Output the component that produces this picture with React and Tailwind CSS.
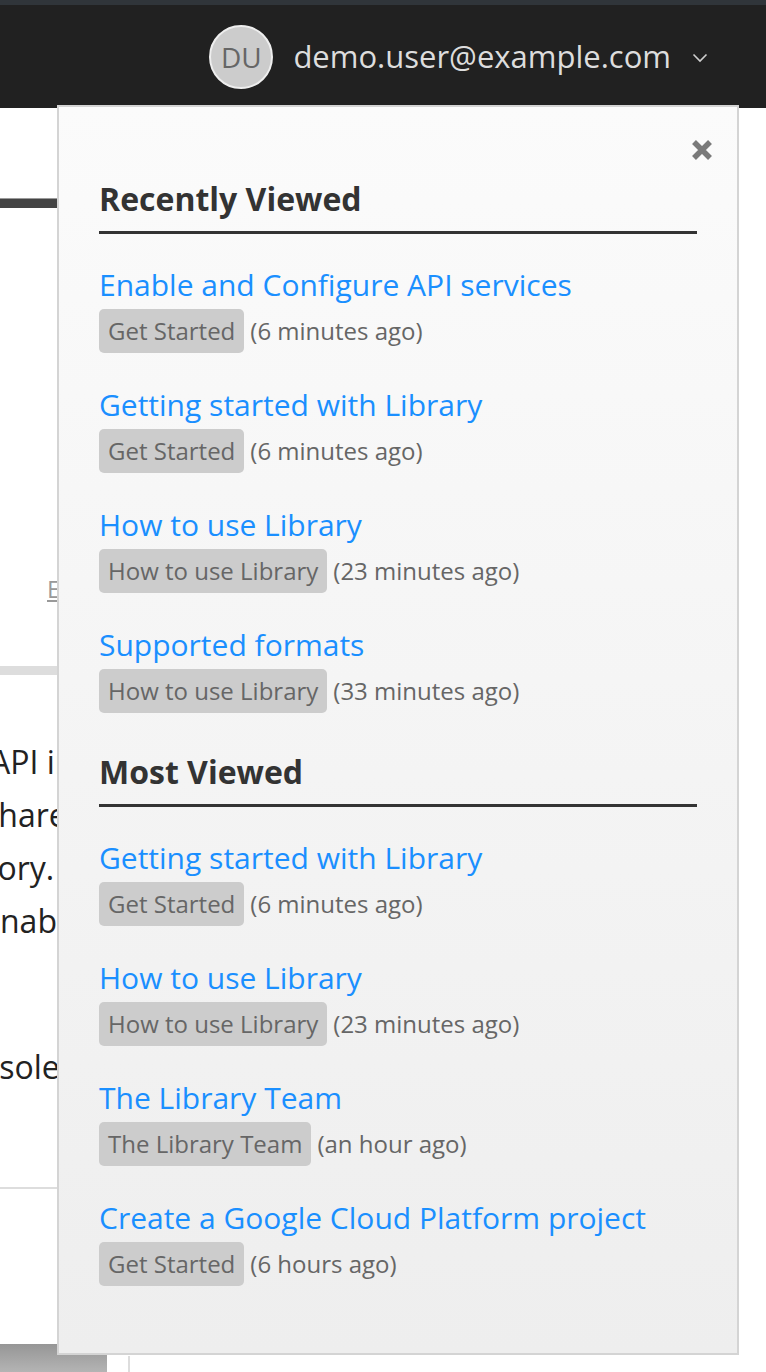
import React from 'react';

const recent = [
    { title: 'Enable and Configure API services', tag: 'Get Started', when: '(6 minutes ago)' },
    { title: 'Getting started with Library', tag: 'Get Started', when: '(6 minutes ago)' },
    { title: 'How to use Library', tag: 'How to use Library', when: '(23 minutes ago)' },
    { title: 'Supported formats', tag: 'How to use Library', when: '(33 minutes ago)' },
];

const popular = [
    { title: 'Getting started with Library', tag: 'Get Started', when: '(6 minutes ago)' },
    { title: 'How to use Library', tag: 'How to use Library', when: '(23 minutes ago)' },
    { title: 'The Library Team', tag: 'The Library Team', when: '(an hour ago)' },
    { title: 'Create a Google Cloud Platform project', tag: 'Get Started', when: '(6 hours ago)' },
];

const HistoryList = ({ items }) => (
    <ul className="mt-[31px] flex flex-col gap-[32px]">
        {items.map((item, i) => (
            <li key={i}>
                <a href="#" className="block text-[30px] leading-[40px] text-[#1a8fff] whitespace-nowrap">
                    {item.title}
                </a>
                <div className="mt-1 flex items-center text-[24px] text-[#666]">
                    <span className="h-[44px] px-[9px] leading-[44px] rounded-[5px] bg-[#cccccc]">{item.tag}</span>
                    <span className="ml-[6px]">{item.when}</span>
                </div>
            </li>
        ))}
    </ul>
);

const Section = ({ title, items, className = '' }) => (
    <section className={className}>
        <h2 className="text-[32px] leading-[36px] font-bold text-[#333] pb-[14px] border-b-[3px] border-[#333]">{title}</h2>
        <HistoryList items={items} />
    </section>
);

const App = () => {
    return (
        <div className="relative min-h-[1372px] h-[1372px] overflow-hidden bg-white" style={{ fontFamily: '"Open Sans", "Noto Sans", sans-serif' }}>

            {/* Top bar */}
            <header>
                <div className="h-[5px] bg-[#30353a]" />
                <div className="h-[103px] bg-[#212121] flex items-center justify-end pr-[58px]">
                    <div className="w-[64px] h-[64px] rounded-full bg-[#cccccc] border-2 border-[#eeeeee] flex items-center justify-center text-[28px] text-[#666]">
                        DU
                    </div>
                    <span className="ml-[20px] text-[31px] text-[#dddddd]">demo.user@example.com</span>
                    <svg className="ml-[21px] mt-[2px]" width="16" height="10" viewBox="0 0 16 10" fill="none">
                        <polyline points="1.5,1.5 8,8 14.5,1.5" stroke="#cfcfcf" strokeWidth="1.6" />
                    </svg>
                </div>
            </header>

            {/* Page content behind the panel */}
            <main className="text-[#222]">
                <div className="mt-[90px] w-[400px]">
                    <div className="h-px bg-[#9a9a9a]" />
                    <div className="h-[9px] bg-[#444]" />
                </div>
                <a href="#" className="block mt-[365px] ml-[47px] text-[24px] leading-[32px] text-[#999] underline whitespace-nowrap">Edit this page</a>
                <div className="mt-[61px] w-[400px] h-[9px] bg-[#dddddd]" />
                <div className="mt-[60px] text-[32px] leading-[53px] whitespace-nowrap">
                    <p className="-ml-[10px]">API integration</p>
                    <p className="-ml-[17px]">shared</p>
                    <p className="-ml-[88px]">directory.</p>
                    <p className="-ml-[18px]">enable</p>
                </div>
                <p className="mt-[93px] -ml-[55px] text-[32px] leading-[53px] whitespace-nowrap">console</p>
                <div className="mt-[94px] w-[400px] h-[2px] bg-[#dddddd]" />
                <div className="mt-[155px] flex items-end">
                    <div className="w-[107px] h-[28px] bg-linear-to-b from-[#969696] to-[#b4b4b4]" />
                    <div className="ml-[21px] w-[2px] h-[16px] bg-[#dddddd]" />
                </div>
            </main>

            {/* History dropdown */}
            <div className="absolute top-[105px] left-[57px] w-[682px] border-2 border-[#d4d4d4] bg-linear-to-b from-[#fbfbfb] to-[#eeeeee] px-[40px] pt-[26px] pb-[67px]">
                <div className="h-[34px] flex justify-end items-center -mr-[17px]">
                    <button className="w-[24px] h-[24px] flex items-center justify-center" aria-label="Close">
                        <svg width="24" height="24" viewBox="0 0 24 24" fill="none">
                            <path d="M4 4 L20 20 M20 4 L4 20" stroke="#7a7a7a" strokeWidth="5.5" />
                        </svg>
                    </button>
                </div>
                <Section title="Recently Viewed" items={recent} className="mt-[14px]" />
                <Section title="Most Viewed" items={popular} className="mt-[41px]" />
            </div>
        </div>
    );
};

export default App;
